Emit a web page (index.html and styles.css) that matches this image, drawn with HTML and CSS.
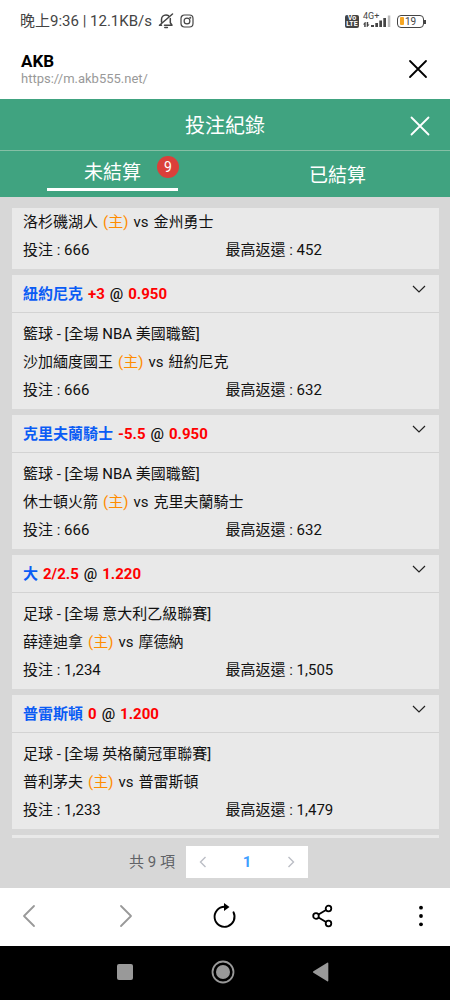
FILE: index.html
```html
<!DOCTYPE html>
<html lang="zh-Hant">
<head>
<meta charset="utf-8">
<meta name="viewport" content="width=device-width, initial-scale=1">
<title>投注紀錄</title>
<link rel="stylesheet" href="styles.css">
</head>
<body>
<div class="status">
  <span class="status-text">晚上9:36 | 12.1KB/s</span>
  <svg class="status-bell" width="16" height="16" viewBox="0 0 16 16" fill="none" stroke="#444" stroke-width="1.500" stroke-linecap="round" stroke-linejoin="round"><path d="M3.500 9V6.500C3.500 4 5.300 2 8 2c1 0 1.700.2 2.400.7M12.300 5.500v4.300l1.700 2.400H6.500M14.500 1 1.500 12.200h2M6.800 14.600h2.600"/></svg>
  <svg class="status-cam" width="14" height="14" viewBox="0 0 14 14" fill="none" stroke="#444" stroke-width="1.200"><rect x="1" y="1" width="12" height="12" rx="3.500"/><circle cx="7" cy="7" r="2.900"/><circle cx="10.300" cy="3.700" r=".4" fill="#444"/></svg>
  <span class="status-right">
    <span class="volte"><span>Vo</span><span>LTE</span></span>
    <span class="signal">
      <span class="signal-type">4G+</span>
      <svg width="28" height="14" viewBox="0 0 28 14" fill="#444"><path d="M2 8 0 10.500h1.200V13h1.500V8zM4.300 13l2.200-2.500H5.200V8H3.700v5z"/><path d="M8 11h3v2H8zM12.300 9h2.700v4h-2.700zM16.300 6.500H19V13h-2.700zM20.300 4H23v9h-2.700z"/><path d="M24.800 1.500h2.500V13h-2.500z" fill="#bbb"/></svg>
    </span>
    <span class="battery"><span class="battery-fill"></span>19</span>
  </span>
</div>

<header class="browser">
  <div class="browser-info">
    <div class="browser-name">AKB</div>
    <div class="browser-url">https://m.akb555.net/</div>
  </div>
  <button class="icon-btn" aria-label="關閉瀏覽器"><svg width="20" height="20" viewBox="0 0 20 20" fill="none" stroke="#000" stroke-width="1.800" stroke-linecap="round"><path d="m2 2 16 16M18 2 2 18"/></svg></button>
</header>

<div class="title-bar">
  <h1 class="title">投注紀錄</h1>
  <button class="icon-btn title-close" aria-label="關閉"><svg width="20" height="20" viewBox="0 0 20 20" fill="none" stroke="#fff" stroke-width="1.800" stroke-linecap="round"><path d="m1.500 1.500 17 17M18.500 1.500l-17 17"/></svg></button>
</div>

<nav class="tabs">
  <button class="tab tab-active"><span class="tab-label">未結算<span class="badge">9</span></span></button>
  <button class="tab">已結算</button>
</nav>

<main class="content">
  <div class="list">
    <article class="card">
      <div class="card-body card-body-cut">
        <div class="match"><span>洛杉磯湖人</span><span class="home">(主)</span><span>vs</span><span>金州勇士</span></div>
        <div class="amounts"><span>投注 : 666</span><span>最高返還 : 452</span></div>
      </div>
    </article>
    <article class="card">
      <button class="card-head"><span class="pick">紐約尼克</span><span class="odds">+3</span><span>@</span><span class="odds">0.950</span><svg class="chevron" width="14" height="8" viewBox="0 0 14 8" fill="none" stroke="#222" stroke-width="1.200"><path d="m1 1 6 6 6-6"/></svg></button>
      <div class="card-body">
        <div>籃球 - [全場 NBA 美國職籃]</div>
        <div class="match"><span>沙加緬度國王</span><span class="home">(主)</span><span>vs</span><span>紐約尼克</span></div>
        <div class="amounts"><span>投注 : 666</span><span>最高返還 : 632</span></div>
      </div>
    </article>
    <article class="card">
      <button class="card-head"><span class="pick">克里夫蘭騎士</span><span class="odds">-5.5</span><span>@</span><span class="odds">0.950</span><svg class="chevron" width="14" height="8" viewBox="0 0 14 8" fill="none" stroke="#222" stroke-width="1.200"><path d="m1 1 6 6 6-6"/></svg></button>
      <div class="card-body">
        <div>籃球 - [全場 NBA 美國職籃]</div>
        <div class="match"><span>休士頓火箭</span><span class="home">(主)</span><span>vs</span><span>克里夫蘭騎士</span></div>
        <div class="amounts"><span>投注 : 666</span><span>最高返還 : 632</span></div>
      </div>
    </article>
    <article class="card">
      <button class="card-head"><span class="pick">大</span><span class="odds">2/2.5</span><span>@</span><span class="odds">1.220</span><svg class="chevron" width="14" height="8" viewBox="0 0 14 8" fill="none" stroke="#222" stroke-width="1.200"><path d="m1 1 6 6 6-6"/></svg></button>
      <div class="card-body">
        <div>足球 - [全場 意大利乙級聯賽]</div>
        <div class="match"><span>薛達迪拿</span><span class="home">(主)</span><span>vs</span><span>摩德納</span></div>
        <div class="amounts"><span>投注 : 1,234</span><span>最高返還 : 1,505</span></div>
      </div>
    </article>
    <article class="card">
      <button class="card-head"><span class="pick">普雷斯頓</span><span class="odds">0</span><span>@</span><span class="odds">1.200</span><svg class="chevron" width="14" height="8" viewBox="0 0 14 8" fill="none" stroke="#222" stroke-width="1.200"><path d="m1 1 6 6 6-6"/></svg></button>
      <div class="card-body">
        <div>足球 - [全場 英格蘭冠軍聯賽]</div>
        <div class="match"><span>普利茅夫</span><span class="home">(主)</span><span>vs</span><span>普雷斯頓</span></div>
        <div class="amounts"><span>投注 : 1,233</span><span>最高返還 : 1,479</span></div>
      </div>
    </article>
    <article class="card card-next"></article>
  </div>
  <div class="pagination">
    <span>共 9 項</span>
    <div class="pager">
      <button class="page-btn" aria-label="上一頁" disabled><svg width="8" height="12" viewBox="0 0 8 12" fill="none" stroke="#bbbec5" stroke-width="1.400"><path d="M6.500 1 1.500 6l5 5"/></svg></button>
      <button class="page-btn page-current">1</button>
      <button class="page-btn" aria-label="下一頁" disabled><svg width="8" height="12" viewBox="0 0 8 12" fill="none" stroke="#bbbec5" stroke-width="1.400"><path d="m1.500 1 5 5-5 5"/></svg></button>
    </div>
  </div>
</main>

<nav class="toolbar">
  <button class="tool" aria-label="返回"><svg width="24" height="24" viewBox="0 0 24 24" fill="none" stroke="#999" stroke-width="1.800" stroke-linecap="round" stroke-linejoin="round"><path d="M17 2 7 12l10 10"/></svg></button>
  <button class="tool" aria-label="前進"><svg width="24" height="24" viewBox="0 0 24 24" fill="none" stroke="#999" stroke-width="1.800" stroke-linecap="round" stroke-linejoin="round"><path d="m6 2 10 10L6 22"/></svg></button>
  <button class="tool" aria-label="重新整理"><svg width="26" height="26" viewBox="0 0 26 26" fill="none" stroke="#000" stroke-width="1.900" stroke-linecap="round"><path d="M12.500 3.800a10 10 0 1 0 9 5.500"/><path d="M12 0v8l5.500-4z" fill="#000" stroke="none"/></svg></button>
  <button class="tool" aria-label="分享"><svg width="24" height="24" viewBox="0 0 24 24" fill="none" stroke="#000" stroke-width="1.800"><circle cx="5" cy="12" r="2.800"/><circle cx="17.500" cy="4.500" r="2.800"/><circle cx="17.500" cy="19.500" r="2.800"/><path d="m7.500 10.500 7.500-4.500M7.500 13.500l7.500 4.500"/></svg></button>
  <button class="tool" aria-label="更多"><svg width="24" height="24" viewBox="0 0 24 24"><circle cx="12" cy="3.700" r="1.900"/><circle cx="12" cy="12" r="1.900"/><circle cx="12" cy="20.300" r="1.900"/></svg></button>
</nav>
<nav class="system">
  <button class="tool" aria-label="最近"><svg width="24" height="24" viewBox="0 0 24 24" fill="#999"><rect x="4" y="4" width="16" height="16" rx="2"/></svg></button>
  <button class="tool" aria-label="主畫面"><svg width="24" height="24" viewBox="0 0 24 24" fill="#999"><circle cx="12" cy="12" r="10.500" fill="none" stroke="#999" stroke-width="1.800"/><circle cx="12" cy="12" r="7"/></svg></button>
  <button class="tool" aria-label="上一步"><svg width="24" height="24" viewBox="0 0 24 24" fill="#999"><path d="M4.400 11.300 18.200 2.800q1.100-.6 1.100.6v17.200q0 1.200-1.100.6L4.400 12.700q-1-.7 0-1.400z"/></svg></button>
</nav>
</body>
</html>
```

FILE: styles.css
```css
* {
  box-sizing: border-box;
}

body {
  display: flex;
  flex-direction: column;
  height: 100vh;
  margin: 0;
  background: #fff;
  color: #111;
  font-family: Roboto, "Noto Sans CJK TC", sans-serif;
  font-size: 15px;
  line-height: 28px;
}

button {
  margin: 0;
  padding: 0;
  border: 0;
  background: none;
  color: inherit;
  font: inherit;
}

svg {
  display: block;
  flex: none;
}

.status {
  display: flex;
  flex: none;
  align-items: center;
  height: 42px;
  padding: 0 26px 0 20px;
  color: #444;
}

.status-bell {
  margin-left: 6px;
}

.status-cam {
  margin-left: 6px;
}

.status-right {
  display: flex;
  align-items: center;
  gap: 4px;
  margin-left: auto;
}

.volte {
  display: flex;
  flex-direction: column;
  justify-content: center;
  width: 14px;
  height: 13px;
  border-radius: 2px;
  background: #444;
  color: #fff;
  font-size: 7px;
  font-weight: 700;
  line-height: 6px;
  text-align: center;
}

.signal {
  position: relative;
}

.signal-type {
  position: absolute;
  top: -2px;
  left: 0;
  font-size: 9px;
  line-height: 8px;
}

.battery {
  position: relative;
  display: flex;
  align-items: center;
  gap: 1px;
  width: 27px;
  height: 13px;
  margin-left: 2px;
  padding-left: 2px;
  border: 1px solid #444;
  border-radius: 4px;
  font-size: 10px;
  line-height: 11px;
}

.battery::after {
  content: "";
  position: absolute;
  top: 4px;
  right: -3px;
  width: 2px;
  height: 4px;
  background: #444;
}

.battery-fill {
  width: 4px;
  height: 8px;
  border-radius: 1px;
  background: #f6a623;
}

.browser {
  display: flex;
  flex: none;
  align-items: center;
  justify-content: space-between;
  height: 57px;
  padding: 0 22px 4px 21px;
}

.browser-name {
  color: #000;
  font-size: 17px;
  font-weight: 700;
  line-height: 20px;
}

.browser-url {
  color: #999;
  font-size: 13px;
  line-height: 16px;
}

.icon-btn {
  display: flex;
}

.title-bar {
  position: relative;
  display: flex;
  flex: none;
  align-items: center;
  justify-content: center;
  height: 52px;
  padding-top: 2px;
  border-bottom: 1px solid #85bfa5;
  background: #40a380;
  color: #fff;
}

.title {
  margin: 0;
  font-size: 20px;
  font-weight: 400;
}

.title-close {
  position: absolute;
  right: 20px;
}

.tabs {
  display: grid;
  flex: none;
  grid-template-columns: 1fr 1fr;
  height: 46px;
  padding-bottom: 6px;
  background: #40a380;
  color: #fff;
  font-size: 19px;
}

.tab {
  padding-top: 10px;
}

.tab-active {
  margin: 0 47px;
  padding-top: 6px;
  border-bottom: 3px solid #fff;
}

.tab-label {
  position: relative;
}

.badge {
  position: absolute;
  top: -5px;
  left: 73px;
  width: 22px;
  height: 22px;
  border-radius: 50%;
  background: #db3f3a;
  font-size: 14px;
  line-height: 22px;
}

.content {
  display: flex;
  flex: 1;
  flex-direction: column;
  min-height: 0;
  padding: 11px 11px 0 12px;
  background: #d7d7d7;
}

.list {
  display: flex;
  flex: 1;
  flex-direction: column;
  gap: 6px;
  min-height: 0;
  overflow: hidden;
}

.card {
  flex: none;
  background: #e9e9e9;
}

.card-next {
  height: 134px;
}

.card-head {
  display: flex;
  align-items: center;
  gap: 5px;
  width: 100%;
  height: 38px;
  padding: 0 13px 0 11px;
  border-bottom: 1px solid #d3d3d3;
  font-weight: 500;
}

.pick {
  color: #0a5cf5;
  font-weight: 700;
}

.odds {
  color: #f00;
  font-weight: 700;
}

.chevron {
  margin: 0 0 10px auto;
}

.card-body {
  padding: 7px 11px 5px;
}

.card-body-cut {
  padding-top: 0;
}

.match {
  display: flex;
  gap: 5px;
}

.home {
  color: #ff8c00;
}

.amounts {
  display: grid;
  grid-template-columns: 1fr 1fr;
}

.pagination {
  display: flex;
  flex: none;
  align-items: center;
  justify-content: center;
  gap: 11px;
  height: 50px;
  padding: 0 14px 2px 0;
  color: #606266;
}

.pager {
  display: flex;
  height: 32px;
  background: #fff;
}

.page-btn {
  display: flex;
  align-items: center;
  justify-content: center;
  width: 34px;
}

.page-current {
  width: 54px;
  color: #409eff;
  font-weight: 700;
}

.toolbar {
  display: flex;
  flex: none;
  align-items: center;
  justify-content: space-between;
  height: 58px;
  padding: 0 9px 2px;
}

.tool {
  display: flex;
  align-items: center;
  justify-content: center;
  width: 40px;
  height: 40px;
}

.system {
  display: flex;
  flex: none;
  align-items: center;
  justify-content: center;
  gap: 58px;
  height: 54px;
  padding: 0 4px 2px 0;
  background: #000;
}
```
